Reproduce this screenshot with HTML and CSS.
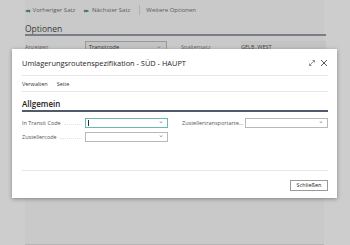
FILE: index.html
```html
<!DOCTYPE html>
<html lang="de">
<head>
    <meta charset="utf-8">
    <link rel="stylesheet" href="styles.css">
</head>
<body>
<div class="page">
    <div class="toolbar">
        <span class="tb-item"><span class="tb-icon">&#9664;&#9664;</span> Vorheriger Satz</span>
        <span class="tb-item"><span class="tb-icon">&#9654;&#9654;</span> Nächster Satz</span>
        <span class="tb-sep"></span>
        <span class="tb-item">Weitere Optionen</span>
    </div>
    <div class="section">
        <div class="section-title">Optionen</div>
        <div class="opt-row">
            <span class="opt-label">Anzeigen</span>
            <span class="opt-select">Transitcode<span class="chev">&#8964;</span></span>
            <span class="opt-label opt-label2">Spaltensatz</span>
            <span class="opt-value">GELB..WEST</span>
        </div>
    </div>
</div>

<div class="dialog">
    <div class="dlg-head">
        <span class="dlg-title">Umlagerungsroutenspezifikation - SÜD - HAUPT</span>
        <span class="dlg-icons">
            <svg width="8" height="8" viewBox="0 0 8 8"><path d="M1.5 6.5 L6.5 1.5 M4.5 1.5 H6.5 V3.5 M1.5 4.5 V6.5 H3.5" stroke="#666" stroke-width="0.7" fill="none"/></svg>
            <svg width="8" height="8" viewBox="0 0 8 8"><path d="M1 1 L7 7 M7 1 L1 7" stroke="#444" stroke-width="0.9" fill="none"/></svg>
        </span>
    </div>
    <div class="dlg-actions">
        <span>Verwalten</span>
        <span>Seite</span>
    </div>
    <div class="dlg-body">
        <div class="group-title">Allgemein</div>
        <div class="fields">
            <div class="col">
                <div class="field">
                    <span class="label">In Transit Code</span>
                    <span class="input focus"><span class="caret"></span><span class="chev">&#8964;</span></span>
                </div>
                <div class="field">
                    <span class="label">Zustellercode</span>
                    <span class="input"><span class="chev">&#8964;</span></span>
                </div>
            </div>
            <div class="col">
                <div class="field">
                    <span class="label">Zustellertransportarte...</span>
                    <span class="input"><span class="chev">&#8964;</span></span>
                </div>
            </div>
        </div>
    </div>
    <div class="dlg-foot">
        <button type="button" class="btn">Schließen</button>
    </div>
</div>
</body>
</html>
```

FILE: styles.css
```css
/* Grundlayout */
html, body {
    margin: 0;
    height: 100%;
}

body {
    background-color: #cdcdcd;
    font-family: "Open Sans", "Noto Sans", Arial, sans-serif;
    color: #444;
    overflow: hidden;
    position: relative;
}

.page {
    margin: 0 26px 0 25px;
    height: 244px;
    background-color: #c9c9c9;
    border-bottom: 1px solid #b5b5b5;
}

/* Aktionsleiste im Hintergrund */
.toolbar {
    height: 19px;
    display: flex;
    align-items: center;
    font-size: 6px;
    color: #5a5a5a;
    gap: 9px;
}

.tb-icon {
    color: #3c6e6e;
    font-size: 4px;
    letter-spacing: -1px;
    margin-right: 2px;
}

.tb-sep {
    width: 1px;
    height: 10px;
    background: #b0b0b0;
    margin: 0 -3px 0 0;
}

.section {
    padding-top: 4px;
}

.section-title {
    font-size: 8.5px;
    color: #3a3a3a;
    padding-bottom: 0;
    border-bottom: 2px solid #7a7f86;
    margin-right: -2px;
}

.opt-row {
    display: flex;
    align-items: center;
    height: 12px;
    margin-top: 5px;
    font-size: 5.5px;
    color: #666;
}

.opt-label {
    width: 60px;
}

.opt-label2 {
    margin-left: 14px;
}

.opt-select {
    width: 77px;
    height: 10px;
    border: 1px solid #9a9a9a;
    background: #c3c3c3;
    display: flex;
    align-items: center;
    padding-left: 3px;
    color: #333;
    position: relative;
}

.opt-value {
    color: #444;
    background: #c3c3c3;
    height: 12px;
    line-height: 12px;
    flex: 1;
    margin-right: -2px;
}

.chev {
    position: absolute;
    right: 4px;
    top: -1px;
    font-size: 7px;
    color: #888;
}

/* Dialog im Vordergrund */
.dialog {
    position: absolute;
    left: 12px;
    top: 49px;
    width: 325px;
    height: 149px;
    background: #fff;
    box-shadow: 0 1px 4px rgba(0, 0, 0, 0.35);
    display: flex;
    flex-direction: column;
    padding: 0 9px 0 10px;
    box-sizing: border-box;
}

.dlg-head {
    height: 26px;
    display: flex;
    align-items: center;
    justify-content: space-between;
    border-bottom: 1px solid #e6e6e6;
}

.dlg-title {
    font-size: 7.4px;
    color: #1e1e1e;
    margin-top: 2px;
}

.dlg-icons {
    display: flex;
    gap: 4px;
    margin-top: 1px;
}

.dlg-actions {
    height: 15px;
    display: flex;
    align-items: center;
    gap: 9px;
    font-size: 5.5px;
    color: #333;
    border-bottom: 1px solid #e6e6e6;
}

.dlg-body {
    flex: 1;
}

.group-title {
    font-size: 8px;
    color: #222;
    font-weight: 600;
    margin-top: 6px;
    padding-bottom: 1px;
    border-bottom: 2px solid #505a68;
}

.fields {
    display: flex;
    margin-top: 6px;
}

.col {
    display: flex;
    flex-direction: column;
    gap: 4px;
}

.col + .col {
    margin-left: 14px;
}

.field {
    display: flex;
    align-items: center;
    height: 10px;
}

.label {
    width: 63px;
    font-size: 5.5px;
    color: #555;
    white-space: nowrap;
    overflow: hidden;
    display: flex;
    align-items: center;
}

/* gepunktete Führungslinie zwischen Beschriftung und Feld */
.label::after {
    content: "";
    flex: 1;
    margin: 2px 3px 0 3px;
    border-bottom: 1px dotted #e2e2e2;
}

.input {
    width: 81px;
    height: 8px;
    border: 1px solid #b8b8b8;
    position: relative;
    display: block;
}

.input.focus {
    border-color: #6cb8b0;
}

.caret {
    position: absolute;
    left: 2px;
    top: 1px;
    width: 1px;
    height: 6px;
    background: #333;
}

.input .chev {
    top: -3px;
    right: 3px;
}

.dlg-foot {
    height: 27px;
    border-top: 1px solid #e6e6e6;
    display: flex;
    align-items: center;
    justify-content: flex-end;
}

.btn {
    width: 38px;
    height: 11px;
    border: 1px solid #9a9a9a;
    background: #fff;
    font-family: "Open Sans", "Noto Sans", Arial, sans-serif;
    font-size: 5.5px;
    color: #222;
    padding: 0;
    margin-top: 1px;
}
```
